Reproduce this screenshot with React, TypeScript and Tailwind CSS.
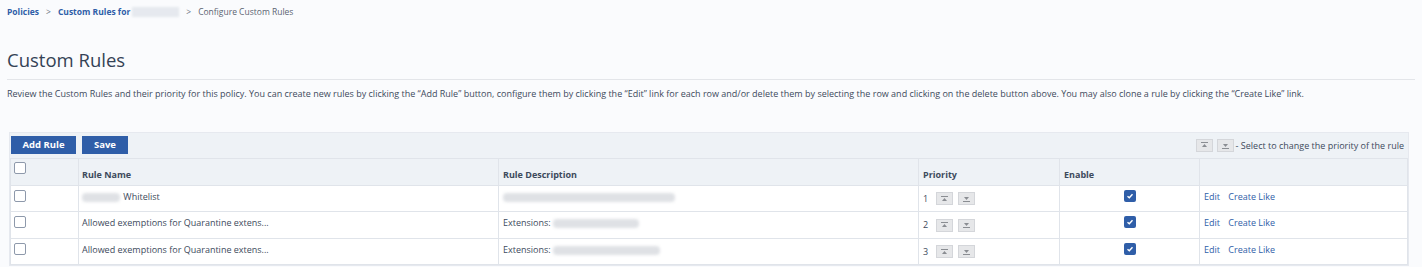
import React from "react";

const font = { fontFamily: '"Open Sans", "Liberation Sans", sans-serif' };

const PriBtn = ({ down }: { down?: boolean }) => (
  <span className="inline-flex h-[13px] w-[17px] items-center justify-center border border-[#d4d6da] bg-[#e6e7e9]">
    <svg width="7" height="6" viewBox="0 0 7 6">
      {down ? (
        <>
          <rect x="0" y="5" width="7" height="1" fill="#8a8d92" />
          <path d="M1 1h5L3.5 4z" fill="#8a8d92" />
        </>
      ) : (
        <>
          <rect x="0" y="0" width="7" height="1" fill="#8a8d92" />
          <path d="M1 5h5L3.5 2z" fill="#8a8d92" />
        </>
      )}
    </svg>
  </span>
);

const Box = () => (
  <span className="inline-block h-[12px] w-[12px] rounded-[2px] border border-[#8e99ab] bg-white" />
);

const Blur = ({ w }: { w: number }) => (
  <span
    className="inline-block h-[9px] rounded-sm bg-[#dfe1e5] blur-[1.5px] align-middle"
    style={{ width: w }}
  />
);

const Check = () => (
  <span className="inline-flex h-[12px] w-[12px] items-center justify-center rounded-[2px] bg-[#2f5ea8]">
    <svg width="8" height="8" viewBox="0 0 8 8">
      <path d="M1.5 4.2l1.8 1.6L6.5 2.3" stroke="white" strokeWidth="1.4" fill="none" />
    </svg>
  </span>
);

const rows = [
  { name: <><Blur w={38} /> <span className="ml-[1px]">Whitelist</span></>, desc: <Blur w={172} />, p: 1 },
  { name: "Allowed exemptions for Quarantine extens...", desc: <>Extensions: <Blur w={86} /></>, p: 2 },
  { name: "Allowed exemptions for Quarantine extens...", desc: <>Extensions: <Blur w={107} /></>, p: 3 },
];

export default function App() {
  return (
    <div className="h-[267px] w-[1422px] overflow-hidden bg-[#fafbfd] text-[#3d4a5c]" style={font}>
      <div className="flex items-center gap-[7px] px-[7px] pt-[6px] text-[8.5px]">
        <span className="font-bold text-[#2f5ea8]">Policies</span>
        <span className="text-[#6b7480]">&gt;</span>
        <span className="flex items-center gap-[2px] font-bold text-[#2f5ea8]">
          Custom Rules for <span className="inline-block h-[10px] w-[47px] bg-[#e6e9ef] blur-[1px]" />
        </span>
        <span className="text-[#6b7480]">&gt;</span>
        <span className="text-[#5a6472]">Configure Custom Rules</span>
      </div>

      <div className="mx-[7px] mt-[28px] border-b border-[#e3e5e9] pb-[6px] text-[18.5px] leading-[26px] text-[#344255]">
        Custom Rules
      </div>
      <div className="px-[7px] pt-[8px] text-[9px] leading-[12px] text-[#3d4a5c]">
        Review the Custom Rules and their priority for this policy. You can create new rules by clicking the “Add Rule” button, configure them by clicking the “Edit” link for each row and/or delete them by selecting the row and clicking on the delete button above. You may also clone a rule by clicking the “Create Like” link.
      </div>

      <div className="ml-[9px] mt-[32px] w-[1400px] border border-[#e6e9ef]">
        <div className="flex h-[25px] items-center justify-between bg-[#eef2f6] px-[1px]">
          <div className="flex gap-[6px]">
            <button className="h-[18px] w-[65px] bg-[#2f5ea8] text-[9.5px] font-bold text-white">Add Rule</button>
            <button className="h-[18px] w-[46px] bg-[#2f5ea8] text-[9.5px] font-bold text-white">Save</button>
          </div>
          <div className="flex items-center gap-[1px] pr-[3px] text-[9px] text-[#3d4a5c]">
            <PriBtn />
            <span className="ml-[3px]"><PriBtn down /></span>
            <span className="ml-[1px]">- Select to change the priority of the rule</span>
          </div>
        </div>
        <table className="w-full border-collapse text-[9px] text-[#3d4a5c]">
          <colgroup>
            <col className="w-[68px]" />
            <col className="w-[420px]" />
            <col className="w-[420px]" />
            <col className="w-[141px]" />
            <col className="w-[140px]" />
            <col />
          </colgroup>
          <thead>
            <tr className="h-[27px] bg-[#eef2f6] text-left font-bold text-[#3d4a5c]">
              <th className="border border-[#e0e4ea] pl-[3px] align-top pt-[3px]"><Box /></th>
              <th className="border border-[#e0e4ea] pl-[3px] pt-[6px]">Rule Name</th>
              <th className="border border-[#e0e4ea] pl-[4px] pt-[6px]">Rule Description</th>
              <th className="border border-[#e0e4ea] pl-[4px] pt-[6px]">Priority</th>
              <th className="border border-[#e0e4ea] pl-[4px] pt-[6px]">Enable</th>
              <th className="border border-[#e0e4ea]"></th>
            </tr>
          </thead>
          <tbody>
            {rows.map((r, i) => (
              <tr key={i} className="h-[26.5px] bg-white">
                <td className="border border-[#e0e4ea] pl-[3px] align-top pt-[4px]"><Box /></td>
                <td className="border border-[#e0e4ea] pl-[3px] align-top pt-[4px]">{r.name}</td>
                <td className="border border-[#e0e4ea] pl-[4px] align-top pt-[4px]">{r.desc}</td>
                <td className="border border-[#e0e4ea] pl-[4px] align-top pt-[6px]">
                  <div className="flex items-center gap-[5px] text-[#3d4a5c]">
                    <span className="w-[8px] text-[#3d4a5c]">{r.p}</span>
                    <PriBtn />
                    <PriBtn down />
                  </div>
                </td>
                <td className="border border-[#e0e4ea] align-top pt-[4px] text-center">
                  <Check />
                </td>
                <td className="border border-[#e0e4ea] pl-[4px] align-top pt-[4px] text-[#2f5ea8]">
                  Edit <span className="ml-[6px]">Create Like</span>
                </td>
              </tr>
            ))}
          </tbody>
        </table>
      </div>
    </div>
  );
}
